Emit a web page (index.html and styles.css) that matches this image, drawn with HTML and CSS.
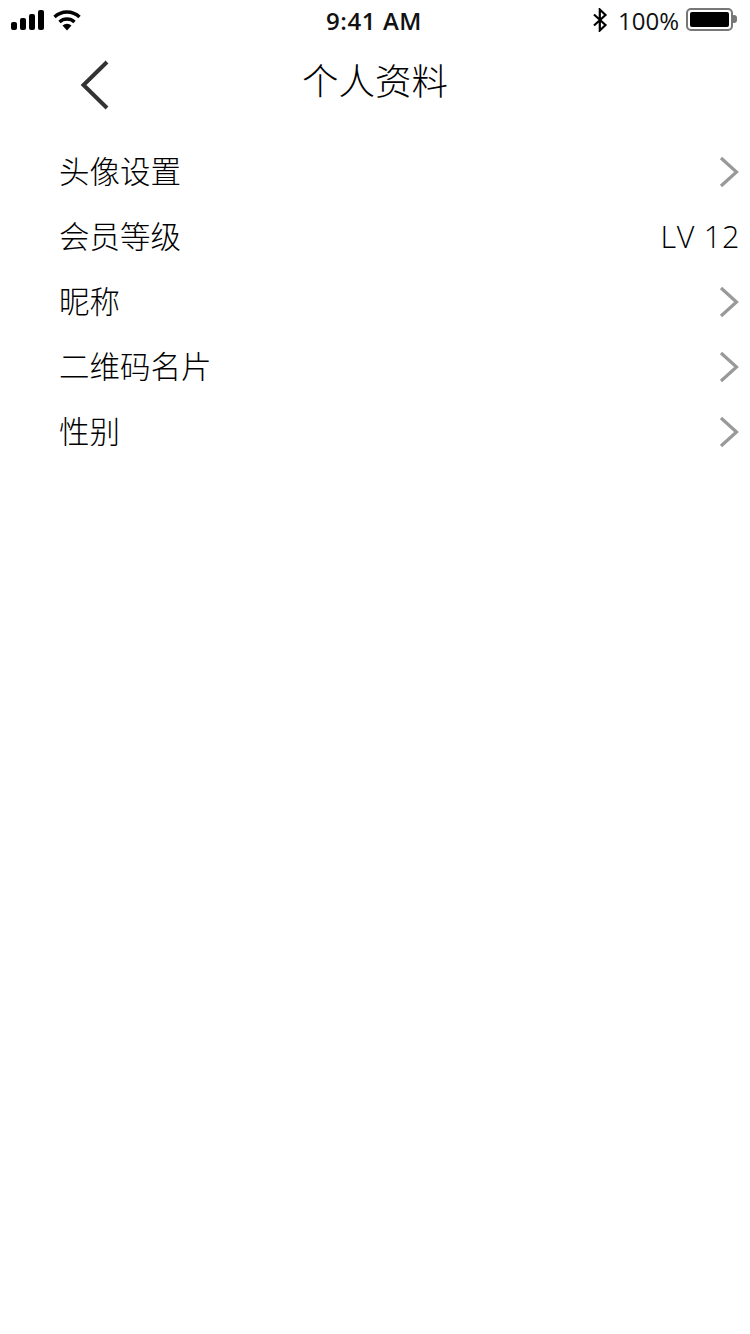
FILE: index.html
```html
<!DOCTYPE html>
<html lang="zh-CN">
<head>
    <meta charset="UTF-8">
    <meta name="viewport" content="width=device-width, initial-scale=1.0">
    <title>个人资料</title>
    <link rel="stylesheet" href="styles.css">
</head>
<body>
    <div class="status-bar">
        <div class="status-left">
            <svg class="signal" width="34" height="20" viewBox="0 0 34 20">
                <rect x="0" y="12" width="6" height="8" rx="2"/>
                <rect x="9" y="8" width="6" height="12" rx="2"/>
                <rect x="18" y="4" width="6" height="16" rx="2"/>
                <rect x="27" y="0" width="6" height="20" rx="2"/>
            </svg>
            <svg class="wifi" width="28" height="21" viewBox="0 0 28 21">
                <path d="M1.5 7 A18 18 0 0 1 26.5 7" fill="none" stroke="#000" stroke-width="3.4"/>
                <path d="M6.5 12 A11 11 0 0 1 21.500 12" fill="none" stroke="#000" stroke-width="3.4"/>
                <path d="M9.500 15.500 A7 7 0 0 1 18.500 15.500 L14 20.500 Z"/>
            </svg>
        </div>
        <div class="status-time">9:41 AM</div>
        <div class="status-right">
            <svg class="bluetooth" width="16" height="24" viewBox="0 0 16 24">
                <path d="M2 6.500 L13.500 17 L7.800 22.500 V1.500 L13.500 7 L2 17.500" fill="none" stroke="#000" stroke-width="2.200"/>
            </svg>
            <span class="battery-text">100%</span>
            <div class="battery">
                <div class="battery-body"><div class="battery-fill"></div></div>
                <div class="battery-cap"></div>
            </div>
        </div>
    </div>

    <div class="nav-bar">
        <svg class="back" width="32" height="52" viewBox="0 0 32 52">
            <path d="M28 3 L4.500 26 L28 49" fill="none" stroke="#333" stroke-width="4"/>
        </svg>
        <h1 class="nav-title">个人资料</h1>
    </div>

    <ul class="list">
        <li class="row">
            <span class="label">头像设置</span>
            <svg class="arrow" width="20" height="32" viewBox="0 0 20 32">
                <path d="M2 2 L17.500 16 L2 30" fill="none" stroke="#999" stroke-width="3.200"/>
            </svg>
        </li>
        <li class="row">
            <span class="label">会员等级</span>
            <span class="level">LV 12</span>
        </li>
        <li class="row">
            <span class="label">昵称</span>
            <svg class="arrow" width="20" height="32" viewBox="0 0 20 32">
                <path d="M2 2 L17.500 16 L2 30" fill="none" stroke="#999" stroke-width="3.200"/>
            </svg>
        </li>
        <li class="row">
            <span class="label">二维码名片</span>
            <svg class="arrow" width="20" height="32" viewBox="0 0 20 32">
                <path d="M2 2 L17.500 16 L2 30" fill="none" stroke="#999" stroke-width="3.200"/>
            </svg>
        </li>
        <li class="row">
            <span class="label">性别</span>
            <svg class="arrow" width="20" height="32" viewBox="0 0 20 32">
                <path d="M2 2 L17.500 16 L2 30" fill="none" stroke="#999" stroke-width="3.200"/>
            </svg>
        </li>
    </ul>
</body>
</html>
```

FILE: styles.css
```css
body {
    margin: 0;
    background-color: #fff;
    color: #000;
    font-family: "Open Sans", "Noto Sans CJK SC", sans-serif;
}
.status-bar {
    display: grid;
    grid-template-columns: 1fr auto 1fr;
    align-items: center;
    height: 40px;
    padding: 0 13px 0 11px;
    color: #111;
}
.status-left {
    display: flex;
    align-items: center;
    gap: 8px;
}
.status-time {
    font-size: 24px;
    font-weight: 600;
    letter-spacing: 0.6px;
}
.status-right {
    display: flex;
    align-items: center;
    justify-content: flex-end;
    gap: 9px;
}
.bluetooth {
    margin-right: 1px;
}
.battery-text {
    font-size: 24px;
}
.battery {
    display: flex;
    align-items: center;
    margin-left: -2px;
    margin-bottom: 2px;
}
.battery-body {
    box-sizing: border-box;
    width: 47px;
    height: 23px;
    padding: 2px;
    border: 2px solid #777;
    border-radius: 5px;
}
.battery-fill {
    height: 100%;
    background-color: #000;
    border-radius: 2px;
}
.battery-cap {
    width: 4px;
    height: 8px;
    background-color: #777;
    border-radius: 0 3px 3px 0;
}
.nav-bar {
    display: flex;
    align-items: center;
    justify-content: center;
    position: relative;
    height: 84px;
}
.back {
    position: absolute;
    left: 79px;
    top: 19px;
}
.nav-title {
    margin: 0;
    padding-bottom: 5px;
    font-size: 36.5px;
    font-weight: 300;
}
.list {
    list-style: none;
    margin: 0;
    padding: 15px 10px 0 59px;
}
.row {
    display: flex;
    align-items: center;
    justify-content: space-between;
    height: 65px;
    font-size: 30.5px;
    font-weight: 300;
}
.label {
    margin-bottom: 4px;
}
.level {
    margin-bottom: 2px;
    letter-spacing: 0.7px;
}
.arrow {
    margin-right: 1px;
}
```
